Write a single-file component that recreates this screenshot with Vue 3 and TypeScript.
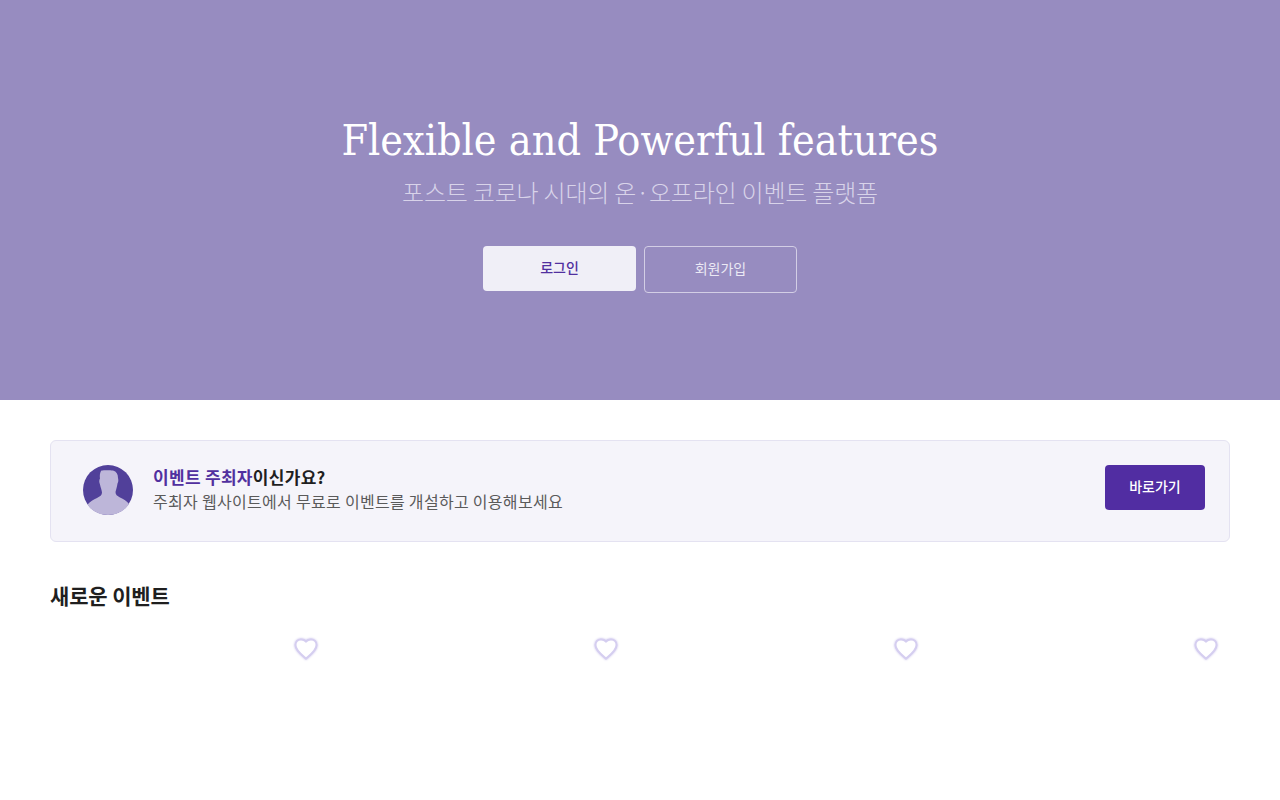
<script setup lang="ts">
const events = [1, 2, 3, 4];
</script>
<template>
  <div class="page">
    <section class="hero">
      <h1>Flexible and Powerful features</h1>
      <p>포스트 코로나 시대의 온·오프라인 이벤트 플랫폼</p>
      <div class="hero-buttons">
        <button class="btn-login">로그인</button>
        <button class="btn-join">회원가입</button>
      </div>
    </section>
    <main class="content">
      <div class="banner">
        <svg class="avatar" viewBox="0 0 50 50">
          <circle cx="25" cy="25" r="25" fill="#51409a" />
          <path
            fill="#bdb6d9"
            d="M18.500 5.500C21 5 27 5 30 5.500C33.500 6.500 35 9 35 13C35.500 15 35.500 17 34.500 18.500C34 22 33 25 32.500 27C32.500 29.500 34 31 37 32.500C40.500 34 44 36 46 39C42 45.500 34 50 25 50C16 50 8 45.500 4.500 39.500C7 36.500 10.500 34.500 14 33C17 31.500 19 30 19 27.500C18.500 24.500 17.500 22 17 19.500C16 17.500 16 15 17 13.500C16.500 10.500 17 7 18.500 5.500Z"
          />
        </svg>
        <div class="banner-text">
          <div class="banner-title"><span>이벤트 주최자</span>이신가요?</div>
          <div class="banner-desc">주최자 웹사이트에서 무료로 이벤트를 개설하고 이용해보세요</div>
        </div>
        <button class="btn-go">바로가기</button>
      </div>
      <h2>새로운 이벤트</h2>
      <div class="event-grid">
        <div class="event-card" v-for="n in events" :key="n">
          <svg class="heart" viewBox="0 0 24 24">
            <path
              fill="#fff"
              stroke="#d5cef0"
              stroke-width="2"
              d="M12 21.500C10 19.500 1.500 14 1.500 8C1.500 4.500 4 2.500 7 2.500C9 2.500 11 3.500 12 4.500C13 3.500 15 2.500 17 2.500C20 2.500 22.500 4.500 22.500 8C22.500 14 14 19.500 12 21.500Z"
            />
          </svg>
        </div>
      </div>
    </main>
  </div>
</template>

<style scoped>
.page {
  font-family: "Noto Sans CJK KR", "Noto Sans", sans-serif;
  color: #1f1f1f;
  height: 800px;
  overflow: hidden;
  background: #fff;
}
.hero {
  height: 400px;
  box-sizing: border-box;
  background: #978cc0;
  padding-top: 110px;
  display: flex;
  flex-direction: column;
  align-items: center;
}
h1 {
  margin: 0;
  font-family: "DejaVu Serif", serif;
  font-stretch: condensed;
  font-weight: 400;
  font-size: 42.7px;
  line-height: 60px;
  color: #fff;
}
.hero p {
  margin: 4px 0 0;
  font-size: 24px;
  font-weight: 300;
  line-height: 36px;
  letter-spacing: -0.2px;
  color: #d8d3e9;
}
.hero-buttons {
  display: flex;
  gap: 8px;
  margin-top: 36px;
  align-items: flex-start;
}
button {
  font-family: inherit;
  font-size: 14px;
  width: 153px;
  padding: 0 0 4px;
  border-radius: 4px;
  cursor: pointer;
}
.btn-login {
  height: 45px;
  background: #f0eff7;
  border: none;
  color: #51309f;
  font-weight: 500;
}
.btn-join {
  height: 47px;
  background: transparent;
  border: 1px solid #d3cee5;
  color: #ebe9f4;
}
.content {
  padding: 40px 50px 0;
}
.banner {
  display: flex;
  align-items: center;
  box-sizing: border-box;
  height: 102px;
  padding: 0 24px 2px 32px;
  background: #f5f4fa;
  border: 1px solid #e4e2f1;
  border-radius: 6px;
}
.avatar {
  width: 50px;
  height: 50px;
  flex: none;
}
.banner-text {
  flex: 1;
  margin: 0 0 2px 20px;
}
.banner-title {
  font-size: 17px;
  font-weight: 700;
  line-height: 25px;
  letter-spacing: 0.3px;
}
.banner-title span {
  color: #51309f;
}
.banner-desc {
  font-size: 16px;
  line-height: 25px;
  letter-spacing: 0.3px;
  color: #5a5a5a;
}
.btn-go {
  width: 100px;
  height: 45px;
  background: #512da2;
  border: none;
  color: #fff;
  font-weight: 500;
  margin-bottom: 5px;
}
h2 {
  margin: 37px 0 0;
  font-size: 21px;
  font-weight: 700;
  line-height: 32px;
  letter-spacing: -0.15px;
}
.event-grid {
  display: grid;
  grid-template-columns: repeat(4, 280px);
  gap: 20px;
  margin-top: 18px;
}
.event-card {
  position: relative;
  height: 140px;
}
.heart {
  position: absolute;
  top: 8px;
  right: 12px;
  width: 24px;
  height: 24px;
  filter: drop-shadow(0 0 1px #c4baea);
}
</style>
